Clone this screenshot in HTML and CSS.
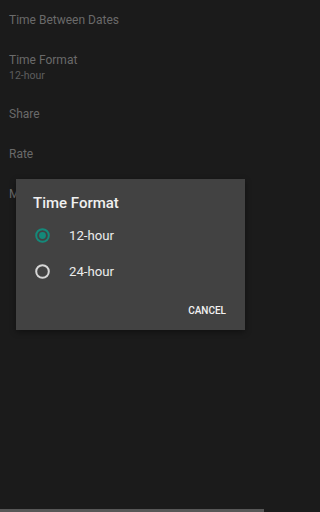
FILE: index.html
```html
<!DOCTYPE html>
<html>
<head>
<meta charset="utf-8">
<link rel="stylesheet" href="styles.css">
</head>
<body>
<div class="screen">
  <div class="list">
    <div class="item"><div class="title">Time Between Dates</div></div>
    <div class="item"><div class="title">Time Format</div><div class="sub">12-hour</div></div>
    <div class="item"><div class="title">Share</div></div>
    <div class="item"><div class="title">Rate</div></div>
    <div class="item"><div class="title">More apps</div></div>
  </div>
  <div class="navbar"></div>
  <div class="dialog">
    <div class="dlg-title">Time Format</div>
    <div class="options">
      <div class="option">
        <svg class="radio" viewBox="0 0 15 15" width="15" height="15"><circle cx="7.5" cy="7.5" r="6.3" fill="none" stroke="#14897a" stroke-width="2"/><circle cx="7.5" cy="7.5" r="3.4" fill="#14897a"/></svg>
        <span class="label">12-hour</span>
      </div>
      <div class="option">
        <svg class="radio" viewBox="0 0 15 15" width="15" height="15"><circle cx="7.5" cy="7.5" r="6.3" fill="none" stroke="#d6d6d6" stroke-width="2"/></svg>
        <span class="label">24-hour</span>
      </div>
    </div>
    <div class="actions"><span class="btn">CANCEL</span></div>
  </div>
</div>
</body>
</html>
```
FILE: styles.css
```css
html, body {
  margin: 0;
  padding: 0;
  background: #1b1b1b;
}
.screen {
  width: 264px;
  height: 512px;
  display: flex;
  flex-direction: column;
  font-family: Roboto, "Noto Sans", sans-serif;
  overflow: hidden;
}
.list {
  padding-left: 9px;
}
.item {
  padding: 12.5px 0 12.5px;
}
.title {
  font-size: 12px;
  line-height: 15px;
  color: #6a6a6a;
}
.sub {
  font-size: 10.5px;
  line-height: 13px;
  margin-top: 1px;
  color: #5e5e5e;
}
.navbar {
  margin-top: auto;
  height: 3px;
  background: #575757;
}
.dialog {
  position: absolute;
  left: 16px;
  top: 179px;
  width: 229px;
  height: 151px;
  box-sizing: border-box;
  background: #424242;
  padding-top: 15px;
  display: flex;
  flex-direction: column;
  box-shadow: 0 2px 6px rgba(0,0,0,0.4);
}
.dlg-title {
  font-size: 15px;
  line-height: 18px;
  font-weight: 500;
  color: #f0f0f0;
  padding-left: 17px;
}
.options {
  margin-top: 5.5px;
}
.option {
  height: 36px;
  display: flex;
  align-items: center;
  padding-left: 19px;
}
.radio {
  display: block;
  flex: none;
}
.label {
  margin-left: 19px;
  font-size: 13.2px;
  color: #ececec;
}
.actions {
  display: flex;
  justify-content: flex-end;
  padding: 15px 19px 0 0;
}
.btn {
  font-size: 10px;
  line-height: 12px;
  font-weight: 500;
  letter-spacing: 0;
  color: #f2f2f2;
}
```
